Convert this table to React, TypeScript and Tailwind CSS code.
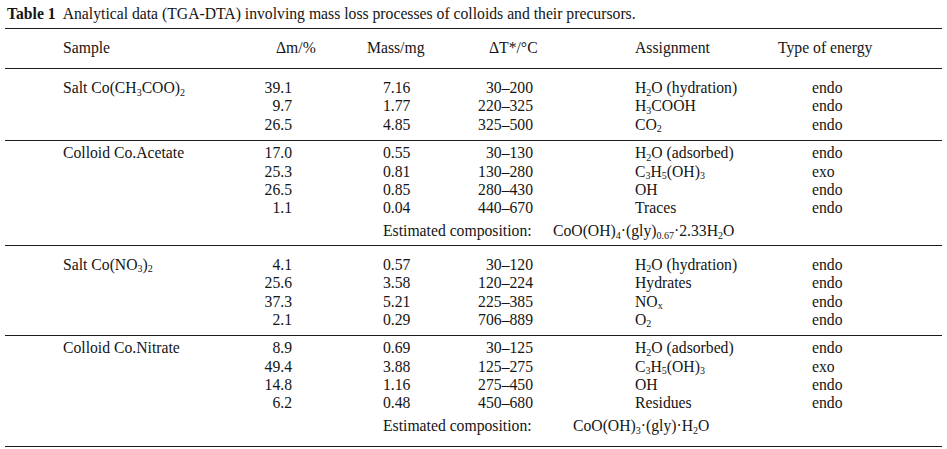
import React from 'react';

type DataRow = {
  sample?: React.ReactNode;
  dm: string;
  mass: string;
  dt: string;
  assign: React.ReactNode;
  energy: string;
};

type Group = {
  rows: DataRow[];
  estimate?: React.ReactNode;
  estimateWidth?: string;
  pad: string;
};

const S = ({ children }: { children: React.ReactNode }) => (
  <sub className="text-[10px]">{children}</sub>
);

const groups: Group[] = [
  {
    pad: 'pb-[6px] pt-[10px]',
    rows: [
      { sample: <>Salt Co(CH<S>3</S>COO)<S>2</S></>, dm: '39.1', mass: '7.16', dt: '30–200', assign: <>H<S>2</S>O (hydration)</>, energy: 'endo' },
      { dm: '9.7', mass: '1.77', dt: '220–325', assign: <>H<S>3</S>COOH</>, energy: 'endo' },
      { dm: '26.5', mass: '4.85', dt: '325–500', assign: <>CO<S>2</S></>, energy: 'endo' },
    ],
  },
  {
    pad: 'pb-[4px] pt-[3px]',
    rows: [
      { sample: 'Colloid Co.Acetate', dm: '17.0', mass: '0.55', dt: '30–130', assign: <>H<S>2</S>O (adsorbed)</>, energy: 'endo' },
      { dm: '25.3', mass: '0.81', dt: '130–280', assign: <>C<S>3</S>H<S>5</S>(OH)<S>3</S></>, energy: 'exo' },
      { dm: '26.5', mass: '0.85', dt: '280–430', assign: 'OH', energy: 'endo' },
      { dm: '1.1', mass: '0.04', dt: '440–670', assign: 'Traces', energy: 'endo' },
    ],
    estimate: <>CoO(OH)<S>4</S>·(gly)<S>0.67</S>·2.33H<S>2</S>O</>,
    estimateWidth: 'w-[170px]',
  },
  {
    pad: 'pb-[6px] pt-[10px]',
    rows: [
      { sample: <>Salt Co(NO<S>3</S>)<S>2</S></>, dm: '4.1', mass: '0.57', dt: '30–120', assign: <>H<S>2</S>O (hydration)</>, energy: 'endo' },
      { dm: '25.6', mass: '3.58', dt: '120–224', assign: 'Hydrates', energy: 'endo' },
      { dm: '37.3', mass: '5.21', dt: '225–385', assign: <>NO<S>x</S></>, energy: 'endo' },
      { dm: '2.1', mass: '0.29', dt: '706–889', assign: <>O<S>2</S></>, energy: 'endo' },
    ],
  },
  {
    pad: 'pb-[10px] pt-[3px]',
    rows: [
      { sample: 'Colloid Co.Nitrate', dm: '8.9', mass: '0.69', dt: '30–125', assign: <>H<S>2</S>O (adsorbed)</>, energy: 'endo' },
      { dm: '49.4', mass: '3.88', dt: '125–275', assign: <>C<S>3</S>H<S>5</S>(OH)<S>3</S></>, energy: 'exo' },
      { dm: '14.8', mass: '1.16', dt: '275–450', assign: 'OH', energy: 'endo' },
      { dm: '6.2', mass: '0.48', dt: '450–680', assign: 'Residues', energy: 'endo' },
    ],
    estimate: <>CoO(OH)<S>3</S>·(gly)·H<S>2</S>O</>,
    estimateWidth: 'w-[190px]',
  },
];

function Rule() {
  return <div className="mx-[5px] h-px bg-[#1c1c1c]" />;
}

function Row({ r }: { r: DataRow }) {
  return (
    <div className="flex h-[18.4px] items-center whitespace-nowrap pl-[63px]">
      <div className="w-[177px]">{r.sample}</div>
      <div className="w-[52px] text-right">{r.dm}</div>
      <div className="w-[158px] pl-[91px]">{r.mass}</div>
      <div className="w-[83px] text-right">{r.dt}</div>
      <div className="w-[279px] pl-[102px]">{r.assign}</div>
      <div>{r.energy}</div>
    </div>
  );
}

export default function App() {
  return (
    <div
      className="h-[449px] w-[947px] overflow-hidden bg-white text-[15.7px] leading-[18.4px] text-[#151515]"
      style={{ fontFamily: '"Liberation Serif", "Times New Roman", serif' }}
    >
      <div className="flex h-[28px] items-center pl-[7px]">
        <span className="font-bold">Table 1</span>
        <span className="ml-[7px]">Analytical data (TGA-DTA) involving mass loss processes of colloids and their precursors.</span>
      </div>
      <Rule />
      <div className="flex h-[39px] items-center whitespace-nowrap pl-[63px]">
        <div className="w-[213px]">Sample</div>
        <div className="w-[91px]">Δm/%</div>
        <div className="w-[122px]">Mass/mg</div>
        <div className="w-[146px]">ΔT*/°C</div>
        <div className="w-[143px]">Assignment</div>
        <div>Type of energy</div>
      </div>
      <Rule />
      {groups.map((g, i) => (
        <React.Fragment key={i}>
          <div className={g.pad}>
            {g.rows.map((r, j) => (
              <Row key={j} r={r} />
            ))}
            {g.estimate && (
              <div className="mt-[4.6px] flex h-[18.4px] items-center whitespace-nowrap pl-[383px]">
                <div className={g.estimateWidth}>Estimated composition:</div>
                <div>{g.estimate}</div>
              </div>
            )}
          </div>
          <Rule />
        </React.Fragment>
      ))}
    </div>
  );
}
